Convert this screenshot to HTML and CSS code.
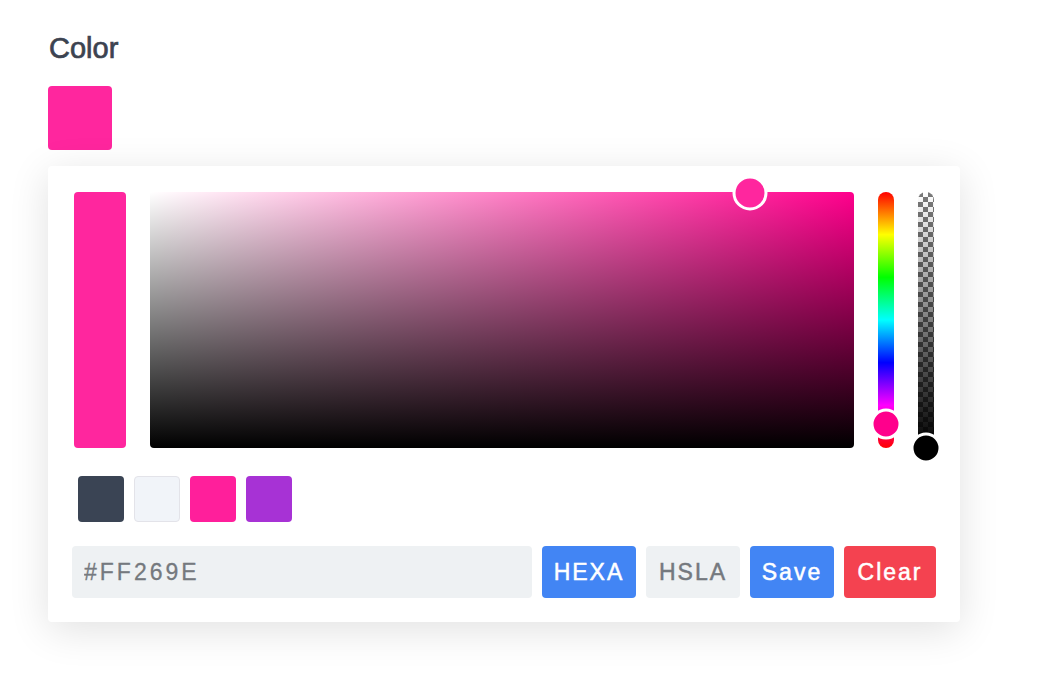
FILE: index.html
```html
<!DOCTYPE html>
<html>
<head>
<meta charset="utf-8">
<link rel="stylesheet" href="styles.css">
</head>
<body>
<div class="page">
  <h1 class="title">Color</h1>
  <button class="trigger" aria-label="Pick color"></button>
  <div class="popup">
    <div class="selection">
      <div class="preview"></div>
      <div class="palette">
        <div class="knob palette-knob"></div>
      </div>
      <div class="slider hue">
        <div class="knob hue-knob"></div>
      </div>
      <div class="slider opacity">
        <div class="knob opacity-knob"></div>
      </div>
    </div>
    <div class="swatches">
      <div class="swatch sw-slate"></div>
      <div class="swatch sw-light"></div>
      <div class="swatch sw-pink"></div>
      <div class="swatch sw-purple"></div>
    </div>
    <div class="interaction">
      <input class="result" value="#FF269E" readonly>
      <button class="btn btn-active">HEXA</button>
      <button class="btn btn-plain">HSLA</button>
      <button class="btn btn-save">Save</button>
      <button class="btn btn-clear">Clear</button>
    </div>
  </div>
</div>
</body>
</html>
```
FILE: styles.css
```css
* { box-sizing: border-box; }
html, body { margin: 0; padding: 0; background: #fff; }
body { font-family: "Liberation Sans", Arial, sans-serif; }

.page {
  padding: 31px 0 68px 48px;
}

.title {
  margin: 0 0 21px 1px;
  font-size: 29px;
  line-height: 34px;
  font-weight: normal;
  color: #3c4350;
  -webkit-text-stroke: 0.7px #3c4350;
}

.trigger {
  display: block;
  width: 64px;
  height: 64px;
  border: 0;
  padding: 0;
  border-radius: 4px;
  background: #ff269e;
}

.popup {
  margin-top: 16px;
  width: 912px;
  height: 456px;
  background: #fff;
  border-radius: 4px;
  box-shadow: 0 8px 40px rgba(0, 0, 0, 0.12);
  padding: 26px 24px 24px 24px;
  display: flex;
  flex-direction: column;
}

.selection {
  display: flex;
  height: 256px;
  margin: 0 2px;
  gap: 24px;
}

.preview {
  width: 52px;
  border-radius: 4px;
  background: #ff269e;
}

.palette {
  position: relative;
  width: 704px;
  border-radius: 4px;
  background:
    linear-gradient(to top, #000, rgba(0,0,0,0)),
    linear-gradient(to right, #fff, hsl(327, 100%, 50%));
}

.slider {
  position: relative;
  width: 16px;
  border-radius: 8px;
}

.hue {
  background: linear-gradient(to bottom,
    #f00 0%, #ff0 16.66%, #0f0 33.33%, #0ff 50%, #00f 66.66%, #f0f 83.33%, #f00 100%);
}

.opacity {
  border-radius: 8px 8px 0 0;
  background:
    linear-gradient(to bottom, rgba(0,0,0,0), #000),
    repeating-conic-gradient(#fff 0 25%, #7a7a7a 0 50%) 0 0 / 10px 10px;
}

.knob {
  position: absolute;
  border: 3px solid #fff;
  border-radius: 50%;
  transform: translate(-50%, -50%);
}

.palette-knob {
  left: 85.2%;
  top: 1px;
  width: 35px;
  height: 35px;
  background: #ff269e;
}

.hue-knob {
  left: 50%;
  top: 90.8%;
  width: 31px;
  height: 31px;
  background: hsl(327, 100%, 50%);
}

.opacity-knob {
  left: 50%;
  top: 100%;
  width: 31px;
  height: 31px;
  background: #000;
}

.swatches {
  display: flex;
  gap: 10px;
  margin: 28px 0 0 6px;
}

.swatch {
  width: 46px;
  height: 46px;
  border-radius: 4px;
}
.sw-slate { background: #3a4454; }
.sw-light { background: #f1f4f9; border: 1px solid #e3e3e9; }
.sw-pink { background: #ff1f9b; }
.sw-purple { background: #a732d5; }

.interaction {
  display: flex;
  gap: 10px;
  margin-top: 24px;
  height: 52px;
}

.result {
  width: 460px;
  height: 52px;
  border: 0;
  border-radius: 4px;
  background: #eef1f3;
  color: #75797e;
  font-family: "Liberation Sans", Arial, sans-serif;
  font-size: 23px;
  letter-spacing: 3px;
  padding: 0 0 0 12px;
  outline: none;
  -webkit-text-stroke: 0.3px #75797e;
}

.btn {
  height: 52px;
  border: 0;
  border-radius: 4px;
  font-family: "Liberation Sans", Arial, sans-serif;
  font-size: 23px;
  letter-spacing: 2px;
  padding: 0;
  color: #fff;
  -webkit-text-stroke: 0.5px #fff;
}

.btn-active { width: 94px; background: #4285f4; }
.btn-plain { width: 94px; background: #eef1f3; color: #75797e; -webkit-text-stroke: 0.5px #75797e; }
.btn-save { width: 84px; background: #4285f4; }
.btn-clear { width: 92px; background: #f44250; }
```
